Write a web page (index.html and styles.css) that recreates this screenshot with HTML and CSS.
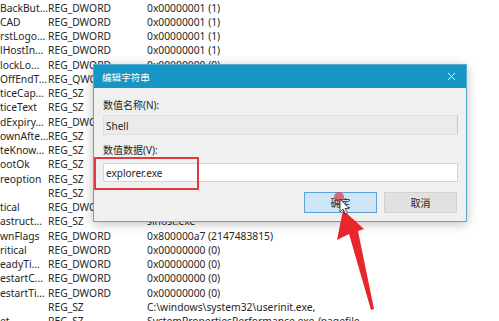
FILE: index.html
```html
<!DOCTYPE html>
<html lang="zh">
<head>
    <meta charset="UTF-8">
    <title>注册表编辑器</title>
    <link rel="stylesheet" href="styles.css">
</head>
<body>

    <div class="list">
        <div class="row"><span>BackBut...</span><span>REG_DWORD</span><span>0x00000001 (1)</span></div>
        <div class="row"><span>CAD</span><span>REG_DWORD</span><span>0x00000001 (1)</span></div>
        <div class="row"><span>rstLogo...</span><span>REG_DWORD</span><span>0x00000001 (1)</span></div>
        <div class="row"><span>lHostIn...</span><span>REG_DWORD</span><span>0x00000001 (1)</span></div>
        <div class="row"><span>lockLo...</span><span>REG_DWORD</span><span>0x00000000 (0)</span></div>
        <div class="row"><span>OffEndT...</span><span>REG_QWORD</span><span></span></div>
        <div class="row"><span>ticeCap...</span><span>REG_SZ</span><span></span></div>
        <div class="row"><span>ticeText</span><span>REG_SZ</span><span></span></div>
        <div class="row"><span>dExpiry...</span><span>REG_DWORD</span><span></span></div>
        <div class="row"><span>ownAfte...</span><span>REG_SZ</span><span></span></div>
        <div class="row"><span>teKnow...</span><span>REG_SZ</span><span></span></div>
        <div class="row"><span>ootOk</span><span>REG_SZ</span><span></span></div>
        <div class="row"><span>reoption</span><span>REG_SZ</span><span></span></div>
        <div class="row"><span></span><span>REG_SZ</span><span></span></div>
        <div class="row"><span>tical</span><span>REG_DWORD</span><span></span></div>
        <div class="row"><span>astruct...</span><span>REG_SZ</span><span>sihost.exe</span></div>
        <div class="row"><span>wnFlags</span><span>REG_DWORD</span><span>0x800000a7 (2147483815)</span></div>
        <div class="row"><span>ritical</span><span>REG_DWORD</span><span>0x00000000 (0)</span></div>
        <div class="row"><span>eadyTi...</span><span>REG_DWORD</span><span>0x00000000 (0)</span></div>
        <div class="row"><span>estartC...</span><span>REG_DWORD</span><span>0x00000000 (0)</span></div>
        <div class="row"><span>estartTi...</span><span>REG_DWORD</span><span>0x00000000 (0)</span></div>
        <div class="row"><span></span><span>REG_SZ</span><span>C:\windows\system32\userinit.exe,</span></div>
        <div class="row"><span>et</span><span>REG_SZ</span><span>SystemPropertiesPerformance.exe /pagefile</span></div>
    </div>

    <!-- 编辑字符串 对话框 -->
    <div class="dialog">
        <div class="titlebar">
            <span>编辑字符串</span>
            <svg class="close" width="9" height="9" viewBox="0 0 9 9">
                <path d="M1 1 L8 8 M8 1 L1 8" stroke="#fff" stroke-width="1"/>
            </svg>
        </div>
        <div class="dialog-body">
            <label class="lbl1">数值名称(N):</label>
            <div class="field readonly">Shell</div>
            <label class="lbl2">数值数据(V):</label>
            <div class="field edit">explorer.exe</div>
            <div class="buttons">
                <button class="btn ok">确定</button>
                <button class="btn">取消</button>
            </div>
        </div>
    </div>

    <!-- 标注 -->
    <div class="mark"></div>
    <div class="click-dot"></div>
    <svg class="overlay" width="499" height="321" viewBox="0 0 499 321">
        <path d="M343 210 L364 229 L358 231 L374 309 L371 310 L349 234 L337 240 Z" fill="#e8262c"/>
        <path d="M340 199 L340 212 L343 209 L345.5 214 L347.5 213 L345 208.5 L349 208.5 Z" fill="#fff" stroke="#222" stroke-width="0.8" stroke-linejoin="round"/>
    </svg>

</body>
</html>
```

FILE: styles.css
```css
/* Base */
body {
    margin: 0;
    width: 499px;
    height: 321px;
    overflow: hidden;
    background-color: #fff;
    font-family: "Noto Sans", "Noto Sans CJK SC", sans-serif;
    color: #262626;
    position: relative;
}

/* Value list */
.list {
    padding-top: 0.5px;
}

.row {
    display: grid;
    grid-template-columns: 48px 99px 1fr;
    height: 14.25px;
    line-height: 14.25px;
    font-size: 10.3px;
    white-space: nowrap;
}

.row span {
    overflow: hidden;
}

/* Dialog */
.dialog {
    position: absolute;
    left: 93px;
    top: 64px;
    width: 372px;
    height: 156px;
    border: 1px solid #5aa9cf;
    background-color: #f0f0f0;
    box-shadow: 0 2px 10px rgba(0, 0, 0, 0.25);
}

.titlebar {
    height: 23px;
    background-color: #1596c4;
    color: #fff;
    font-size: 9.6px;
    display: flex;
    align-items: center;
    justify-content: space-between;
    padding: 0 10px 0 8px;
}

.close {
    display: block;
}

.dialog-body {
    padding: 10px 8px 0 9px;
    display: flex;
    flex-direction: column;
    font-size: 10px;
}

.dialog-body label {
    line-height: 14px;
    height: 14px;
}

.field {
    height: 18px;
    line-height: 18px;
    padding-left: 2px;
    box-sizing: border-box;
    font-size: 10px;
}

.readonly {
    margin-top: 3px;
    height: 20px;
    line-height: 20px;
    background-color: #ebebeb;
    border: 1px solid #e0e0e0;
    border-right-color: #c8c8c8;
}

.lbl2 {
    margin-top: 8px;
}

.edit {
    margin-top: 6px;
    height: 19px;
    background-color: #fff;
    border: 1px solid #d4d4d4;
}

.buttons {
    display: flex;
    justify-content: flex-end;
    gap: 7px;
    margin-top: 10px;
    padding-right: 1px;
}

.btn {
    width: 73px;
    height: 21px;
    font-family: inherit;
    font-size: 10px;
    color: #1f1f1f;
    background-color: #e1e1e1;
    border: 1px solid #d2d2d2;
    padding: 0;
}

.btn.ok {
    background-color: #cde5f7;
    border-color: #5ea3d8;
}

/* Annotations */
.mark {
    position: absolute;
    left: 94px;
    top: 157px;
    width: 101px;
    height: 29px;
    border: 2.5px solid #e2383c;
    border-radius: 1px;
}

.click-dot {
    position: absolute;
    left: 334px;
    top: 192px;
    width: 10px;
    height: 10px;
    border-radius: 50%;
    background-color: rgba(225, 60, 70, 0.75);
}

.overlay {
    position: absolute;
    left: 0;
    top: 0;
}
```
